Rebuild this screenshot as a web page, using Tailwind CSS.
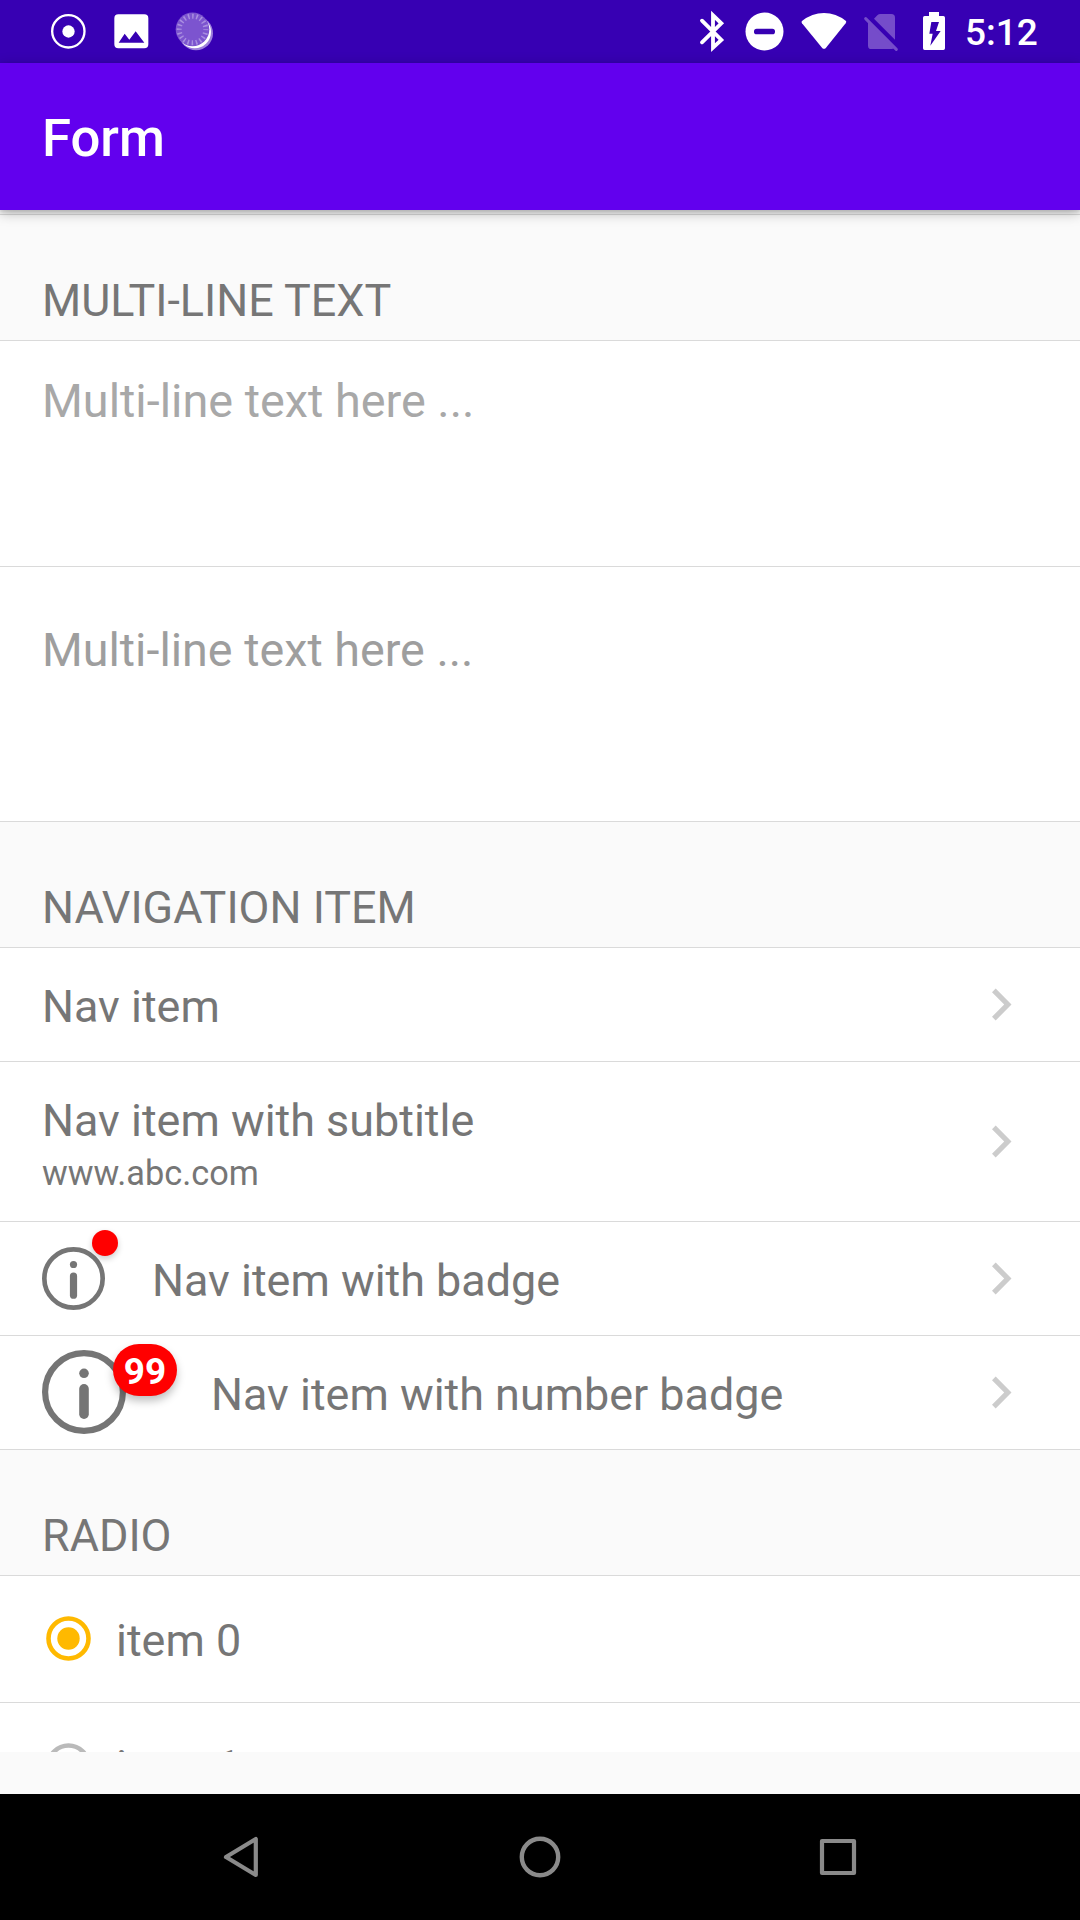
<!DOCTYPE html>
<html lang="en">
<head>
<meta charset="utf-8">
<title>Form</title>
<script src="https://cdn.jsdelivr.net/npm/@tailwindcss/browser@4"></script>
</head>
<body class="w-[1080px] h-[1920px] overflow-hidden bg-[#fafafa] flex flex-col font-[Roboto,sans-serif] text-[#767676]">

<!-- Status bar -->
<div class="h-[63px] shrink-0 bg-[#3700b3] flex items-start text-white">
  <svg class="ml-[51px] w-[36px] h-[63px]" viewBox="153 0 108 189" fill="none"><circle cx="205" cy="94" r="48.500" stroke="#fff" stroke-width="7"/><circle cx="205.500" cy="94.500" r="18.500" fill="#fff"/></svg>
  <svg class="ml-[27px] w-[36px] h-[63px]" viewBox="342 0 108 189"><path fill="#fff" fill-rule="evenodd" d="M355 43H433Q445 43 445 55V133Q445 145 433 145H355Q343 145 343 133V55Q343 43 355 43ZM356 128H433L407 94L388 119L374 101Z"/></svg>
  <svg class="ml-[25px] w-[39px] h-[63px]" viewBox="525 0 117 189" fill="none"><circle cx="588" cy="100" r="51" fill="#9d7fdc"/><circle cx="584" cy="96" r="49" fill="#fff"/><circle cx="577.500" cy="88" r="50.500" fill="#7c54cf"/><circle cx="577.500" cy="88.500" r="40" stroke="#a98ee0" stroke-width="15" stroke-dasharray="4.500 8.066" stroke-dashoffset="2.250"/></svg>
  <div class="ml-auto mr-[42px] flex">
    <svg class="w-[26px] h-[63px]" viewBox="57 0 78 189" fill="none" stroke="#fff" stroke-width="11.500" stroke-linecap="round"><path d="M66 62L124 120L99 143V46L124 70L66 127"/></svg>
    <svg class="ml-[20px] w-[39px] h-[63px]" viewBox="195 0 117 189"><circle cx="253.500" cy="94.500" r="57" fill="#fff"/><rect x="222" y="86" width="63" height="17" rx="8" fill="#3700b3"/></svg>
    <svg class="ml-[17px] w-[46px] h-[63px]" viewBox="363 0 138 189" fill="#fff"><path d="M366 63Q396 39 432 39Q468 39 498 63Q500 66 497 70L438 143Q432 150 426 143L366 70Q363 66 366 63Z"/></svg>
    <svg class="ml-[16px] w-[36px] h-[63px]" viewBox="549 0 108 189" fill="#754cca"><path d="M582 56L592 46Q596 42 601 42H634Q645 42 645 53V119Z"/><path d="M564 67L642 145Q639 147 635 147H574Q564 147 564 137Z"/><path d="M557 56L649 148" stroke="#754cca" stroke-width="9" stroke-linecap="round"/></svg>
    <svg class="ml-[23px] w-[24px] h-[63px]" viewBox="726 0 72 189"><path fill="#fff" fill-rule="evenodd" d="M747 36H777V48H790Q795 48 795 53V145Q795 150 790 150H734Q729 150 729 145V53Q729 48 734 48H747ZM754 66L748 101H758L751 137L782 93H768L777 66Z"/></svg>
    <span class="ml-[19px] w-[73px] mt-[11px] text-[37px] leading-[43px] font-medium whitespace-nowrap">5:12</span>
  </div>
</div>

<!-- App bar -->
<header class="h-[147px] shrink-0 relative z-10 bg-[#6200ee] text-white px-[42px] pt-[44px] shadow-[0_3px_12px_rgba(0,0,0,0.28),0_2px_4px_rgba(0,0,0,0.12)]">
  <h1 class="text-[52.7px] leading-[62px] font-medium">Form</h1>
</header>

<!-- Scrolling form -->
<main class="h-[1538px] shrink-0 overflow-hidden mt-[4px] flex flex-col text-[44.9px] leading-[53px]">
  <h2 class="h-[127px] shrink-0 border-y border-[#dadada] px-[42px] pt-[59px]">MULTI-LINE TEXT</h2>
  <div class="h-[226px] shrink-0 bg-white border-b border-[#dadada] px-[42px] pt-[33px] text-[46.8px] leading-[55px] text-[#a8a8a8]">Multi-line text here ...</div>
  <div class="h-[255px] shrink-0 bg-white border-b border-[#dadada] px-[42px] pt-[56px] text-[46.7px] leading-[55px] text-[#9e9e9e]">Multi-line text here ...</div>

  <h2 class="h-[126px] shrink-0 border-b border-[#dadada] px-[42px] pt-[59px]">NAVIGATION ITEM</h2>
  <div class="h-[114px] shrink-0 bg-white border-b border-[#dadada] pl-[42px] pr-[68px] flex items-center justify-between">
    <span class="pt-[4px]">Nav item</span>
    <svg class="w-[20px] h-[33px] mb-px" viewBox="0 0 20 33" fill="#ccc"><path d="M3.700 0.500L19.500 16.500L3.700 32.500L0 28.700L12.200 16.500L0 4.300Z"/></svg>
  </div>
  <div class="h-[160px] shrink-0 bg-white border-b border-[#dadada] pl-[42px] pr-[68px] flex items-center justify-between">
    <div class="flex flex-col pt-[4px]"><span>Nav item with subtitle</span><span class="mt-[6px] text-[34.3px] leading-[40px]">www.abc.com</span></div>
    <svg class="w-[20px] h-[33px] mb-px" viewBox="0 0 20 33" fill="#ccc"><path d="M3.700 0.500L19.500 16.500L3.700 32.500L0 28.700L12.200 16.500L0 4.300Z"/></svg>
  </div>
  <div class="h-[114px] shrink-0 bg-white border-b border-[#dadada] pl-[42px] pr-[68px] flex items-center">
    <div class="relative w-[63px] h-[63px]">
      <svg class="w-[63px] h-[63px]" viewBox="0 0 84 84" fill="none"><circle cx="42" cy="42" r="38.900" stroke="#757575" stroke-width="6.200"/><circle cx="42" cy="23.300" r="4.800" fill="#757575"/><rect x="37.200" y="34" width="9.600" height="35" rx="4.800" fill="#757575"/></svg>
      <div class="absolute left-[50px] -top-[17px] w-[26px] h-[26px] rounded-full bg-[#f00] shadow-[0_3px_6px_rgba(0,0,0,0.2)]"></div>
    </div>
    <span class="ml-[47px] mr-auto pt-[4px]">Nav item with badge</span>
    <svg class="w-[20px] h-[33px] mb-px" viewBox="0 0 20 33" fill="#ccc"><path d="M3.700 0.500L19.500 16.500L3.700 32.500L0 28.700L12.200 16.500L0 4.300Z"/></svg>
  </div>
  <div class="h-[114px] shrink-0 bg-white border-b border-[#dadada] pl-[42px] pr-[68px] flex items-center">
    <div class="relative w-[84px] h-[84px] mb-px">
      <svg class="w-[84px] h-[84px]" viewBox="0 0 84 84" fill="none"><circle cx="42" cy="42" r="38.900" stroke="#757575" stroke-width="6.200"/><circle cx="42" cy="23.300" r="4.800" fill="#757575"/><rect x="37.200" y="34" width="9.600" height="35" rx="4.800" fill="#757575"/></svg>
      <div class="absolute left-[71px] -top-[6px] w-[64px] h-[52px] rounded-[26px] bg-[#f00] shadow-[0_5px_9px_rgba(0,0,0,0.25)] pt-[6px] text-center text-white font-bold text-[37px] leading-[43px]">99</div>
    </div>
    <span class="ml-[85px] mr-auto pt-[4px]">Nav item with number badge</span>
    <svg class="w-[20px] h-[33px] mb-px" viewBox="0 0 20 33" fill="#ccc"><path d="M3.700 0.500L19.500 16.500L3.700 32.500L0 28.700L12.200 16.500L0 4.300Z"/></svg>
  </div>

  <h2 class="h-[126px] shrink-0 border-b border-[#dadada] px-[42px] pt-[59px]">RADIO</h2>
  <div class="h-[127px] shrink-0 bg-white border-b border-[#dadada] pl-[46px] flex items-center">
    <svg class="w-[45px] h-[45px] mb-px" viewBox="0 0 45 45" fill="none"><circle cx="22.500" cy="22.500" r="20" stroke="#ffb900" stroke-width="4.600"/><circle cx="22.500" cy="22.500" r="11.200" fill="#ffb900"/></svg>
    <span class="ml-[25px] pt-[3px]">item 0</span>
  </div>
  <div class="h-[127px] shrink-0 bg-white border-b border-[#dadada] pl-[46px] flex items-center">
    <svg class="w-[45px] h-[45px] mb-px" viewBox="0 0 45 45" fill="none"><circle cx="22.500" cy="22.500" r="20" stroke="#bababa" stroke-width="4.600"/></svg>
    <span class="ml-[25px] pt-px">item 1</span>
  </div>
</main>

<!-- System navigation -->
<nav class="mt-[42px] h-[126px] shrink-0 bg-black flex items-center justify-center gap-[252px]">
  <svg class="w-[46px] h-[46px]" viewBox="0 0 46 46" fill="none" stroke="#8a8a8a" stroke-width="4.200" stroke-linejoin="round"><path d="M36.800 5V41L7 23Z"/></svg>
  <svg class="w-[46px] h-[46px]" viewBox="0 0 46 46" fill="none" stroke="#8a8a8a" stroke-width="4.400"><circle cx="23" cy="23" r="18.200"/></svg>
  <svg class="w-[46px] h-[46px]" viewBox="0 0 46 46" fill="none" stroke="#8a8a8a" stroke-width="4.200" stroke-linejoin="round"><rect x="7" y="7" width="32" height="32"/></svg>
</nav>
</body>
</html>
